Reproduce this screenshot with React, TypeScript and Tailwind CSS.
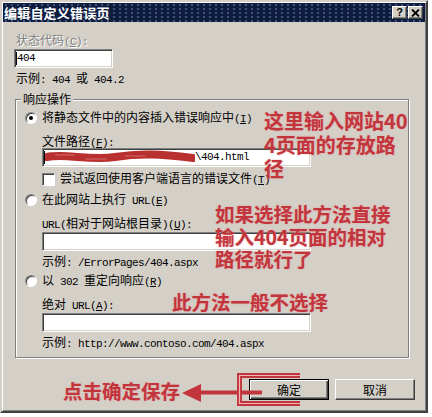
import type { ReactNode } from "react";

// ASCII runs: SimSun half-width chars are 6px wide at 12px
function A({ children }: { children: ReactNode }) {
  return <span className="font-['Liberation_Mono',monospace] text-[11px] tracking-[-0.6px]">{children}</span>;
}

function Field({ className = "", children }: { className?: string; children?: ReactNode }) {
  return (
    <div
      className={`flex items-center h-[19px] bg-white border border-t-[#808080] border-l-[#808080] border-r-white border-b-white shadow-[inset_1px_1px_0_#404040,inset_-1px_-1px_0_#d4d0c8] ${className}`}
    >
      {children}
    </div>
  );
}

function Radio({ checked = false }: { checked?: boolean }) {
  return (
    <span className="flex items-center justify-center w-[12px] h-[12px] rounded-full bg-white border border-t-[#808080] border-l-[#808080] border-r-white border-b-white shadow-[inset_1px_1px_0_#404040]">
      {checked && <span className="w-[4px] h-[4px] rounded-full bg-black" />}
    </span>
  );
}

function TitleButton({ children }: { children: ReactNode }) {
  return (
    <div className="flex items-center justify-center w-[15px] h-[13px] bg-[#d4d0c8] border border-t-white border-l-white border-r-[#404040] border-b-[#404040] shadow-[inset_-1px_-1px_0_#808080]">
      {children}
    </div>
  );
}

const note = "absolute font-bold text-[#c3353d] [text-shadow:0_0_2px_rgba(230,140,140,0.7)]";

export default function App() {
  return (
    <div className="relative w-[432px] h-[417px] bg-white overflow-hidden font-['Noto_Sans_CJK_SC',sans-serif] text-[12px] text-black">
      <div className="w-[428px] h-[413px] flex flex-col p-px bg-[#d4d0c8] border-2 border-t-[#d4d0c8] border-l-[#d4d0c8] border-r-[#404040] border-b-[#404040] shadow-[inset_1px_1px_0_#fff,inset_-1px_-1px_0_#808080]">
        {/* title bar */}
        <div className="h-[19px] flex items-center justify-between pl-px pr-[2px] bg-[#0d1c3f] bg-[radial-gradient(circle,rgba(130,150,190,0.45)_0.7px,transparent_1px)] bg-[length:6px_4px]">
          <span className="text-white font-bold text-[13px] leading-none tracking-[0.2px]">编辑自定义错误页</span>
          <div className="flex gap-px">
            <TitleButton>
              <span className="font-['Liberation_Sans',sans-serif] font-bold text-[11px] leading-none">?</span>
            </TitleButton>
            <TitleButton>
              <svg width="9" height="8" viewBox="0 0 9 8">
                <path d="M1 0.5 L8 7.5 M8 0.5 L1 7.5" stroke="#000" strokeWidth="1.8" />
              </svg>
            </TitleButton>
          </div>
        </div>

        <div className="flex flex-col pl-[13px]">
          <div className="mt-[11px] h-[14px] leading-[14px] text-[#808080] [text-shadow:1px_1px_0_#fff]">
            状态代码<A>(<u>C</u>):</A>
          </div>
          <Field className="mt-[2px] ml-[-2px] w-[99px]">
            <span className="ml-px w-px h-[13px] bg-black" />
            <A>404</A>
          </Field>
          <div className="mt-[3px] h-[14px] leading-[14px]">
            示例<A>: 404 </A>或<A> 404.2</A>
          </div>

          {/* group box */}
          <div className="relative mt-[14px] ml-[-1px] w-[394px] h-[259px] flex flex-col pl-[26px] border border-[#808080] shadow-[inset_1px_1px_0_#fff,1px_1px_0_#fff]">
            <span className="absolute left-[5px] top-[-8px] px-[2px] bg-[#d4d0c8] leading-[14px]">响应操作</span>

            <div className="mt-[11px] ml-[-17px] h-[14px] flex items-center gap-[5px] leading-[14px]">
              <Radio checked />
              <span>
                将静态文件中的内容插入错误响应中<A>(<u>I</u>)</A>
              </span>
            </div>
            <div className="mt-[9px] h-[14px] leading-[14px]">
              文件路径<A>(<u>F</u>):</A>
            </div>
            <Field className="w-[269px]">
              <span className="ml-px w-px h-[13px] bg-black" />
              <svg width="150" height="17" viewBox="0 0 150 17" className="shrink-0">
                <path d="M2 8 C 20 4, 45 12, 70 8 S 115 5, 148 9" stroke="#b8302f" strokeWidth="8" strokeLinecap="round" fill="none" />
                <path d="M10 6 H 30 M 40 10 H 62 M 80 7 H 100" stroke="#d46a6a" strokeWidth="1" fill="none" />
              </svg>
              <A>\404.html</A>
            </Field>
            <div className="mt-[5px] h-[14px] flex items-center gap-[5px] leading-[14px]">
              <span className="w-[13px] h-[13px] bg-white border border-t-[#808080] border-l-[#808080] border-r-white border-b-white shadow-[inset_1px_1px_0_#404040]" />
              <span>
                尝试返回使用客户端语言的错误文件<A>(<u>T</u>)</A>
              </span>
            </div>

            <div className="mt-[7px] ml-[-17px] h-[14px] flex items-center gap-[5px] leading-[14px]">
              <Radio />
              <span>
                在此网站上执行<A> URL(<u>E</u>)</A>
              </span>
            </div>
            <div className="mt-[9px] h-[14px] leading-[14px]">
              <A>URL(</A>相对于网站根目录<A>)(<u>U</u>):</A>
            </div>
            <Field className="mt-[2px] w-[269px]" />
            <div className="mt-[3px] h-[14px] leading-[14px]">
              示例<A>: /ErrorPages/404.aspx</A>
            </div>

            <div className="mt-[6px] ml-[-17px] h-[14px] flex items-center gap-[5px] leading-[14px]">
              <Radio />
              <span>
                以<A> 302 </A>重定向响应<A>(<u>R</u>)</A>
              </span>
            </div>
            <div className="mt-[9px] h-[14px] leading-[14px]">
              绝对<A> URL(<u>A</u>):</A>
            </div>
            <Field className="mt-[2px] w-[269px]" />
            <div className="mt-[3px] h-[14px] leading-[14px]">
              示例<A>: http://www.contoso.com/404.aspx</A>
            </div>
          </div>
        </div>

        {/* buttons */}
        <div className="mt-[21px] flex justify-end gap-[6px] pr-[10px]">
          <button className="w-[80px] h-[21px] flex items-center justify-center bg-[#d4d0c8] border border-black shadow-[inset_1px_1px_0_#fff,inset_-1px_-1px_0_#404040,inset_-2px_-2px_0_#808080] leading-none">
            确定
          </button>
          <button className="w-[80px] h-[21px] flex items-center justify-center bg-[#d4d0c8] border border-t-white border-l-white border-r-[#404040] border-b-[#404040] shadow-[inset_-1px_-1px_0_#808080] leading-none">
            取消
          </button>
        </div>
      </div>

      {/* red annotations drawn over the screenshot */}
      <div className={`${note} left-[264px] top-[109px] text-[20px] leading-[24px]`}>
        这里输入网站40
        <br />
        4页面的存放路
        <br />径
      </div>
      <div className={`${note} left-[215px] top-[203px] text-[19.5px] leading-[22.5px]`}>
        如果选择此方法直接
        <br />
        输入404页面的相对
        <br />
        路径就行了
      </div>
      <div className={`${note} left-[172px] top-[291px] text-[19.5px] leading-[22px]`}>此方法一般不选择</div>
      <div className={`${note} left-[63px] top-[380px] text-[19.5px] leading-[22px]`}>点击确定保存</div>
      <svg className="absolute left-0 top-0 pointer-events-none" width="432" height="417" viewBox="0 0 432 417">
        <polygon points="182,393 201,384 201,402" fill="#c3353d" />
        <path d="M199 392.5 H262" stroke="#c3353d" strokeWidth="4" />
        <path d="M300 375.5 H239.5 V403.5 H300" stroke="#c3353d" strokeWidth="5" fill="none" />
        <path d="M300 375.5 H239.5 V403.5 H300" stroke="#efb4b4" strokeWidth="1.2" fill="none" />
      </svg>
    </div>
  );
}
